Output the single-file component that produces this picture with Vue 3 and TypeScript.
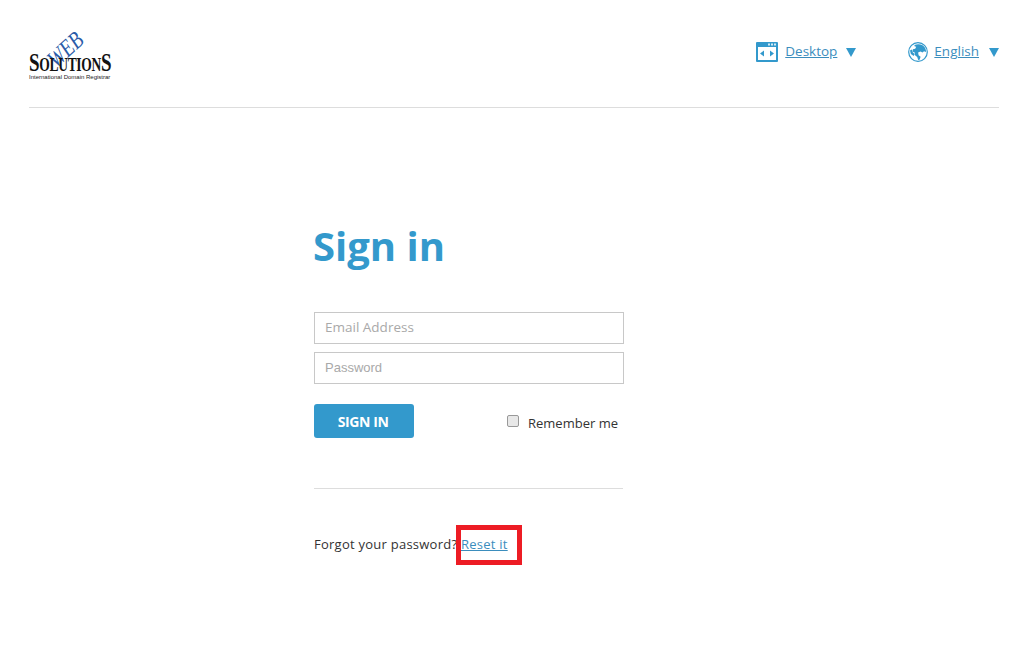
<script setup lang="ts">
const email = '';
</script>

<template>
  <div class="page">
    <header class="top">
      <div class="logo">
        <span class="logo-web">WEB</span>
        <div class="logo-name"><span class="big">S</span>OLUTION<span class="big">S</span></div>
        <div class="logo-sub">International Domain Registrar</div>
      </div>
      <nav class="menus">
        <div class="menu">
          <svg class="ico" width="22" height="20" viewBox="0 0 22 20">
            <rect x="0" y="0" width="22" height="20" rx="1" fill="#3399cc" />
            <rect x="2" y="5" width="18" height="13" fill="#fff" />
            <rect x="12" y="1.500" width="2" height="2" fill="#d5ebf5" />
            <rect x="15" y="1.500" width="2" height="2" fill="#d5ebf5" />
            <rect x="18" y="1.500" width="2" height="2" fill="#d5ebf5" />
            <path d="M4 11.500l4-3v6zM18 11.500l-4-3v6z" fill="#3399cc" />
          </svg>
          <a class="menu-link">Desktop</a>
          <span class="caret"></span>
        </div>
        <div class="menu">
          <svg class="ico globe" width="20" height="20" viewBox="0 0 20 20">
            <circle cx="10" cy="10" r="9.300" fill="#fff" stroke="#3399cc" stroke-width="1.200" />
            <path d="M6.500 3c2-1.100 5.500-1.300 8 .2 2.300 1.400 3.600 4 3.600 6.800l-2.100-.8-1.500 1.300-2-1-2.400 1 .5 2.700 2 1.500-1 3-1.400.4-1-3.200-2.500-1.900v-2.500l-2.300-1 .5-2.300 2.300-.5 1-1.900-1.700-.6z" fill="#3399cc" />
            <path d="M2 8.500l1.800-1 .9 2.800 1.900 1.800-.9 1.800-2.800-1.800z" fill="#3399cc" />
          </svg>
          <a class="menu-link">English</a>
          <span class="caret wide"></span>
        </div>
      </nav>
    </header>

    <main class="signin">
      <h1>Sign in</h1>
      <form class="fields" @submit.prevent>
        <input type="text" placeholder="Email Address" :value="email" />
        <input class="pw" type="password" placeholder="Password" />
      </form>
      <div class="actions">
        <button class="btn" type="button">SIGN IN</button>
        <label class="remember"><span class="check"></span>Remember me</label>
      </div>
      <div class="rule"></div>
      <p class="forgot">
        Forgot your password?
        <span class="reset"><a>Reset it</a><span class="mark"></span></span>
      </p>
    </main>
  </div>
</template>

<style>
body {
  margin: 0;
  background: #fff;
}
</style>

<style scoped>
.page {
  height: 671px;
  overflow: hidden;
  font-family: "Open Sans", "Noto Sans", sans-serif;
  color: #333;
}
.top {
  margin: 0 28px 0 29px;
  height: 107px;
  border-bottom: 1px solid #ddd;
  display: flex;
  justify-content: space-between;
  align-items: flex-start;
}
.logo {
  position: relative;
  width: 84px;
  height: 45px;
  margin-top: 36px;
}
.logo-web {
  position: absolute;
  left: 31px;
  top: 10px;
  font: italic 24px "Liberation Serif", serif;
  color: #2a5ba8;
  transform: rotate(-42deg) scaleX(0.8);
  transform-origin: left bottom;
}
.logo-name {
  position: absolute;
  left: 0;
  top: 17px;
  font: bold 18.500px/20px "Liberation Serif", serif;
  color: #111;
  letter-spacing: -0.4px;
  white-space: nowrap;
  transform: scaleX(0.73);
  transform-origin: left top;
}
.logo-name .big {
  font-size: 26px;
}
.logo-sub {
  position: absolute;
  left: 0;
  top: 38px;
  font: 6px "Liberation Sans", sans-serif;
  color: #222;
  white-space: nowrap;
}
.menus {
  display: flex;
  gap: 52px;
  margin-top: 42px;
}
.menu {
  display: flex;
  align-items: center;
  height: 20px;
  font-size: 13.500px;
}
.ico {
  margin-right: 7px;
}
.globe {
  margin-right: 6px;
}
.menu-link {
  color: #3b8dbd;
  text-decoration: underline;
  margin-top: -2px;
}
.caret {
  margin-left: 9px;
  width: 0;
  height: 0;
  border-left: 5.500px solid transparent;
  border-right: 5.500px solid transparent;
  border-top: 9px solid #3399cc;
}
.caret.wide {
  margin-left: 10px;
}
.signin {
  width: 310px;
  margin-left: 314px;
  padding-top: 110px;
}
h1 {
  margin: 0 0 0 -1px;
  font-size: 40px;
  line-height: 56px;
  font-weight: 700;
  color: #3399cc;
}
.fields {
  margin-top: 38px;
  display: flex;
  flex-direction: column;
  gap: 8px;
}
input {
  box-sizing: border-box;
  width: 310px;
  height: 32px;
  border: 1px solid #c8c8c8;
  padding: 0 10px 3px;
  font: 13.500px "Open Sans", sans-serif;
  outline: none;
}
input::placeholder {
  color: #a9a9a9;
  opacity: 1;
}
.pw {
  font: 13px "Liberation Sans", sans-serif;
  padding-bottom: 1px;
}
.actions {
  margin-top: 20px;
  display: flex;
  justify-content: space-between;
  align-items: center;
  height: 34px;
  padding-right: 6px;
}
.btn {
  width: 100px;
  height: 34px;
  border: 0;
  border-radius: 3px;
  background: #3399cc;
  color: #fff;
  font: 700 14px "Open Sans", sans-serif;
  letter-spacing: -0.4px;
  padding: 0 2px 0 0;
}
.remember {
  display: flex;
  align-items: center;
  font-size: 13px;
  margin-top: 4px;
}
.check {
  box-sizing: border-box;
  width: 12px;
  height: 12px;
  margin-right: 9px;
  margin-top: -5px;
  border: 1px solid #999;
  border-radius: 2px;
  background: #e8e8e8;
}
.rule {
  margin-top: 50px;
  width: 309px;
  border-top: 1px solid #ddd;
}
.forgot {
  margin: 46px 0 0;
  font-size: 13px;
  line-height: 18px;
  letter-spacing: 0.25px;
  white-space: nowrap;
}
.reset {
  position: relative;
  display: inline-block;
}
.reset a {
  color: #3b8dbd;
  text-decoration: underline;
}
.mark {
  position: absolute;
  left: -5px;
  top: -10px;
  width: 66px;
  height: 40px;
  box-sizing: border-box;
  border: 5px solid #ed1c24;
}
</style>
